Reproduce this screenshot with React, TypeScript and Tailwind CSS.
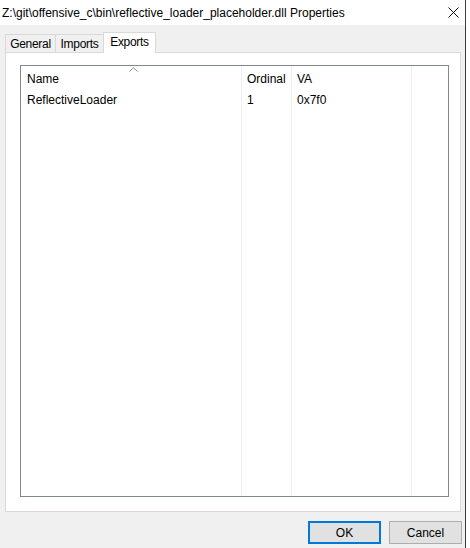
import React from 'react';

const font = { fontFamily: '"Liberation Sans", Arial, sans-serif' };

const SortUp = () => (
  <svg width="9" height="5" viewBox="0 0 9 5" className="absolute left-[108px] top-[1px]">
    <path d="M0.5 4.5 L4.5 0.8 L8.5 4.5" fill="none" stroke="#8a8a8a" strokeWidth="1" />
  </svg>
);

const CloseX = () => (
  <svg width="11" height="11" viewBox="0 0 11 11">
    <path d="M0.5 0.5 L10.5 10.5 M10.5 0.5 L0.5 10.5" stroke="#111" strokeWidth="1" />
  </svg>
);

export default function App() {
  const cols = [
    { w: 'w-[221px]', head: 'Name', val: 'ReflectiveLoader', pad: 'pl-[6px]' },
    { w: 'w-[50px]', head: 'Ordinal', val: '1', pad: 'pl-[5px]' },
    { w: 'w-[120px]', head: 'VA', val: '0x7f0', pad: 'pl-[5px]' },
    { w: 'w-[36px]', head: '', val: '', pad: 'pl-[5px]' },
  ];

  return (
    <div className="flex w-[470px] h-[548px] bg-white text-[12px] text-black" style={font}>
      <div className="flex flex-col w-[465px] h-full">
        <div className="flex items-center justify-between h-[25px] bg-white pl-[2px] pr-[6px]">
          <span className="leading-none">Z:\git\offensive_c\bin\reflective_loader_placeholder.dll Properties</span>
          <CloseX />
        </div>

        <div className="flex flex-col flex-1 bg-[#f0f0f0]">
          <div className="flex items-end h-[27px] pl-[5px]">
            <div className="flex items-center justify-center w-[51px] h-[18px] border border-b-0 border-[#d9d9d9] bg-[#f0f0f0] tracking-[-0.3px]">General</div>
            <div className="flex items-center justify-center w-[48px] h-[18px] border border-b-0 border-l-0 border-[#d9d9d9] bg-[#f0f0f0] tracking-[-0.3px]">Imports</div>
            <div className="relative z-10 -mb-px -ml-px flex items-center justify-center w-[53px] h-[21px] pb-[2px] border border-b-0 border-[#d9d9d9] bg-white tracking-[-0.3px]">Exports</div>
          </div>

          <div className="ml-[5px] w-[456px] h-[460px] border border-[#d9d9d9] bg-white pl-[14px] pt-[12px]">
            <div className="relative flex w-[429px] h-[432px] border border-[#828790] bg-white">
              <SortUp />
              {cols.map((c, i) => (
                <div key={i} className={`flex flex-col h-full ${c.w} ${i < 3 ? 'border-r border-[#eaeef3]' : ''}`}>
                  <div className={`flex items-center h-[25px] ${c.pad}`}>{c.head}</div>
                  <div className={`flex items-center h-[17px] ${c.pad}`}>{c.val}</div>
                </div>
              ))}
            </div>
          </div>

          <div className="flex justify-end gap-[8px] pt-[9px] pr-[3px]">
            <button className="w-[73px] h-[23px] border-2 border-[#0078d7] bg-[#e1e1e1] text-[12px]">OK</button>
            <button className="w-[73px] h-[23px] border border-[#adadad] bg-[#e1e1e1] text-[12px]">Cancel</button>
          </div>
        </div>
      </div>
      <div className="w-px h-full bg-[#3c3c3c]" />
      <div className="flex-1 h-full bg-white" />
    </div>
  );
}
